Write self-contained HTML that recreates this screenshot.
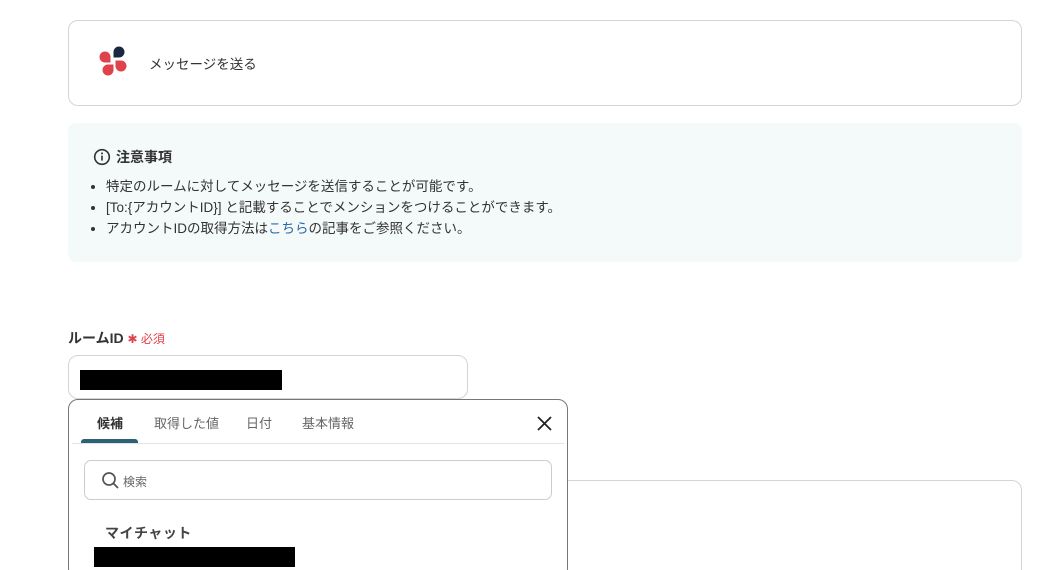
<!DOCTYPE html>
<html><head><meta charset="utf-8"><style>
*{box-sizing:border-box;margin:0;padding:0}
html,body{width:1040px;height:570px;overflow:hidden}
body{background:#fff;font-family:"Liberation Sans","Noto Sans CJK JP",sans-serif;color:#333;position:relative}
.abs{position:absolute}
.card{left:68px;top:20px;width:954px;height:86px;border:1px solid #d4d4d8;border-radius:10px}
.note{left:68px;top:123px;width:954px;height:139px;background:#f4f9f9;border-radius:8px}
.note h4{position:absolute;left:48px;top:24px;font-size:14px;font-weight:bold;color:#333}
.note ul{position:absolute;left:38px;top:53px;font-size:13.5px;line-height:21px;color:#333}
</style></head><body>
<div class="abs card">
 <svg class="abs" style="left:26px;top:22px" width="40" height="40" viewBox="0 0 40 40">
  <path d="M15.5 14L15.5 19.5L10 19.5A5.5 5.5 0 1 1 15.5 14Z" fill="#e0424c"/>
  <path d="M18.5 9L18.5 14.5L24 14.5A5.5 5.5 0 1 0 18.5 9Z" fill="#1a2740"/>
  <path d="M13 21.5L18.5 21.5L18.5 27A5.5 5.5 0 1 1 13 21.5Z" fill="#e0424c"/>
  <path d="M20.5 23L20.5 17.5L26 17.5A5.5 5.5 0 1 1 20.5 23Z" fill="#e0424c"/>
 </svg>
 <div class="abs" style="left:80px;top:32px;font-size:13.5px;color:#333">メッセージを送る</div>
</div>
<div class="abs note">
 <svg class="abs" style="left:25px;top:25px" width="18" height="18" viewBox="0 0 18 18"><circle cx="9" cy="9" r="7.3" fill="none" stroke="#333" stroke-width="1.6"/><rect x="8.2" y="7.6" width="1.6" height="5" fill="#333"/><circle cx="9" cy="5.4" r="1" fill="#333"/></svg>
 <h4>注意事項</h4>
 <ul>
  <li>特定のルームに対してメッセージを送信することが可能です。</li>
  <li>[To:{アカウントID}] と記載することでメンションをつけることができます。</li>
  <li>アカウントIDの取得方法は<span style="color:#2a6aa8">こちら</span>の記事をご参照ください。</li>
 </ul>
</div>
<div class="abs" style="left:68px;top:328px;font-size:14px;font-weight:bold;color:#333">ルームID <span style="color:#e0424c;font-weight:normal;font-size:12px">✱ 必須</span></div>
<div class="abs" style="left:68px;top:355px;width:400px;height:44px;border:1px solid #d4d4d8;border-radius:10px"></div>
<div class="abs" style="left:80px;top:370px;width:202px;height:20px;background:#000"></div>
<div class="abs" style="left:68px;top:480px;width:954px;height:100px;border:1px solid #d4d4d8;border-radius:10px"></div>
<div class="abs" style="left:68px;top:399px;width:500px;height:180px;border:1px solid #777;border-radius:10px;background:#fff">
 <div class="abs" style="left:28px;top:13px;font-size:13px;font-weight:bold;color:#333">候補</div>
 <div class="abs" style="left:85px;top:13px;font-size:13px;color:#666">取得した値</div>
 <div class="abs" style="left:177px;top:13px;font-size:13px;color:#666">日付</div>
 <div class="abs" style="left:233px;top:13px;font-size:13px;color:#666">基本情報</div>
 <svg class="abs" style="left:467px;top:15px" width="17" height="17" viewBox="0 0 17 17"><path d="M2 2L15 15M15 2L2 15" stroke="#222" stroke-width="1.8"/></svg>
 <div class="abs" style="left:12px;top:39px;width:57px;height:4px;background:#2d6178;border-radius:3px 3px 0 0"></div>
 <div class="abs" style="left:3px;top:43px;width:492px;height:1px;background:#e3e3e6"></div>
 <div class="abs" style="left:15px;top:60px;width:468px;height:40px;border:1px solid #ccc;border-radius:7px"></div>
 <svg class="abs" style="left:32px;top:71px" width="19" height="19" viewBox="0 0 19 19"><circle cx="8" cy="8" r="6" fill="none" stroke="#555" stroke-width="1.7"/><path d="M12.5 12.5L17 17" stroke="#555" stroke-width="1.8"/></svg>
 <div class="abs" style="left:54px;top:73px;font-size:12px;color:#666">検索</div>
 <div class="abs" style="left:36px;top:123px;font-size:14px;font-weight:bold;color:#444;letter-spacing:0.5px">マイチャット</div>
 <div class="abs" style="left:25px;top:147px;width:201px;height:20px;background:#000"></div>
</div>
</body></html>
